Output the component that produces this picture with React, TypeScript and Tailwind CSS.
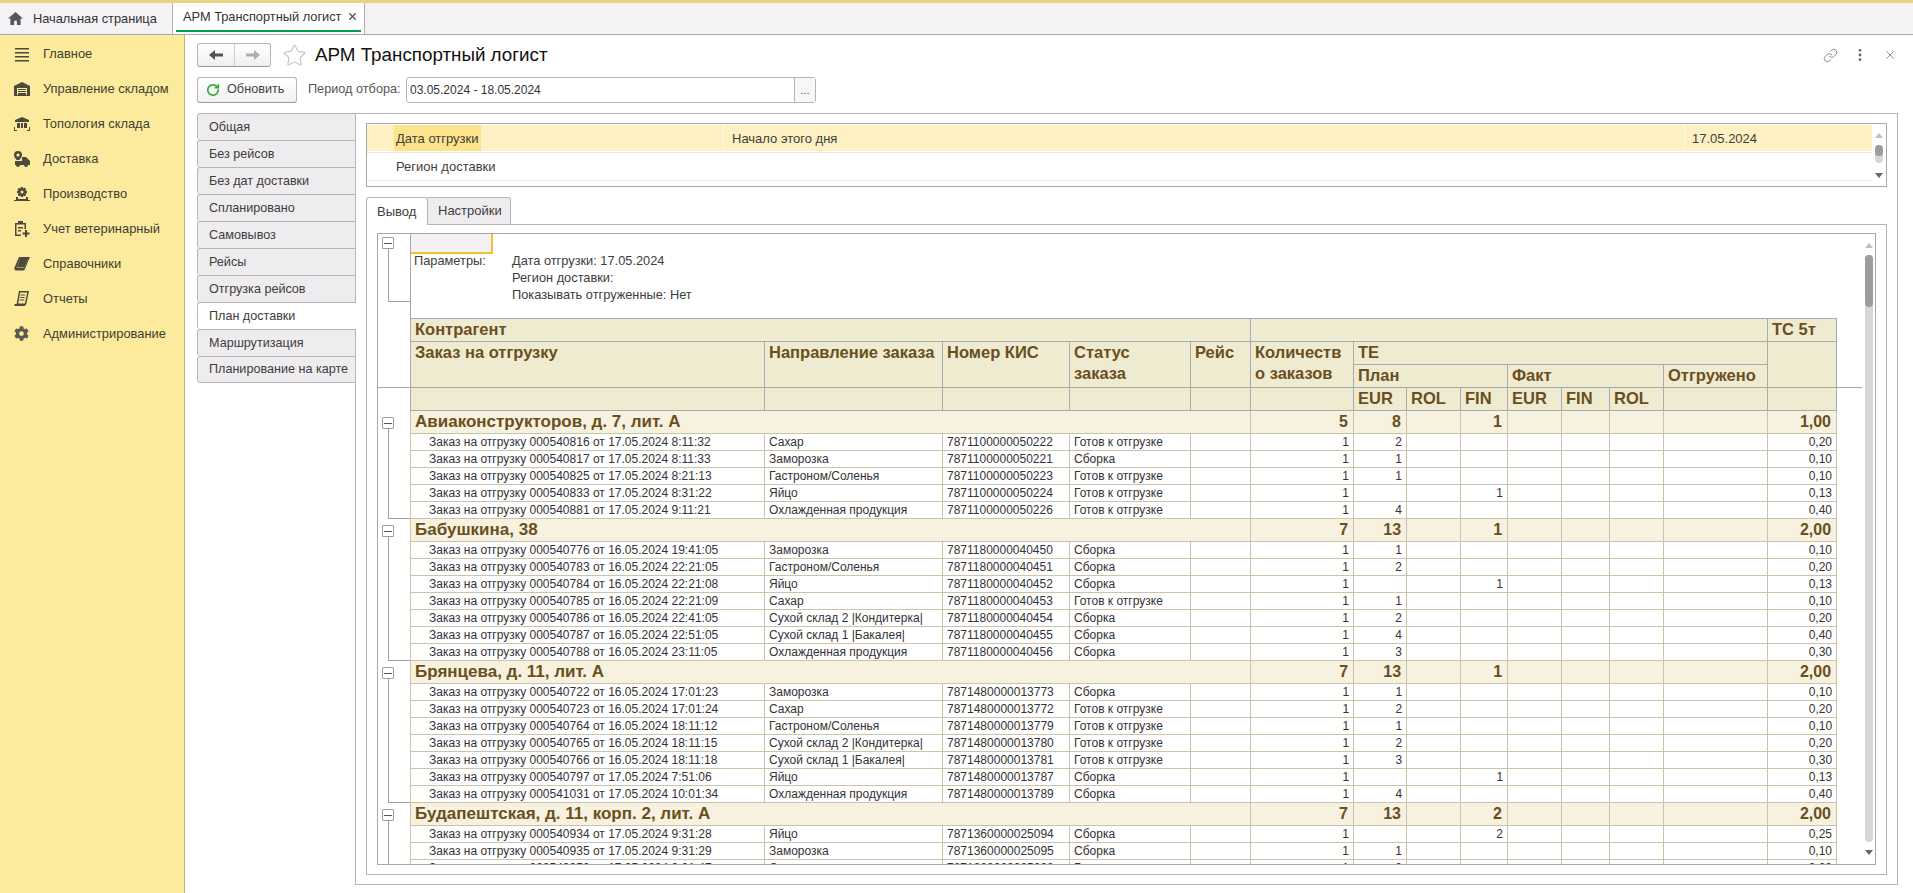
import React from 'react';
import { EllipsisVertical, Link, RotateCw, Star, X } from 'lucide-react';
import { FaCog } from 'react-icons/fa';

type Order = {
  name: string;
  dir: string;
  kis: string;
  status: string;
  eur?: string;
  fin?: string;
  ts: string;
};

type Group = {
  title: string;
  count: string;
  eur: string;
  fin: string;
  ts: string;
  orders: Order[];
};

const READY = 'Готов к отгрузке';
const PICK = 'Сборка';
const ORD = 'Заказ на отгрузку ';

const groups: Group[] = [
  {
    title: 'Авиаконструкторов, д. 7, лит. А',
    count: '5',
    eur: '8',
    fin: '1',
    ts: '1,00',
    orders: [
      { name: ORD + '000540816 от 17.05.2024 8:11:32', dir: 'Сахар', kis: '7871100000050222', status: READY, eur: '2', ts: '0,20' },
      { name: ORD + '000540817 от 17.05.2024 8:11:33', dir: 'Заморозка', kis: '7871100000050221', status: PICK, eur: '1', ts: '0,10' },
      { name: ORD + '000540825 от 17.05.2024 8:21:13', dir: 'Гастроном/Соленья', kis: '7871100000050223', status: READY, eur: '1', ts: '0,10' },
      { name: ORD + '000540833 от 17.05.2024 8:31:22', dir: 'Яйцо', kis: '7871100000050224', status: READY, fin: '1', ts: '0,13' },
      { name: ORD + '000540881 от 17.05.2024 9:11:21', dir: 'Охлажденная продукция', kis: '7871100000050226', status: READY, eur: '4', ts: '0,40' },
    ],
  },
  {
    title: 'Бабушкина, 38',
    count: '7',
    eur: '13',
    fin: '1',
    ts: '2,00',
    orders: [
      { name: ORD + '000540776 от 16.05.2024 19:41:05', dir: 'Заморозка', kis: '7871180000040450', status: PICK, eur: '1', ts: '0,10' },
      { name: ORD + '000540783 от 16.05.2024 22:21:05', dir: 'Гастроном/Соленья', kis: '7871180000040451', status: PICK, eur: '2', ts: '0,20' },
      { name: ORD + '000540784 от 16.05.2024 22:21:08', dir: 'Яйцо', kis: '7871180000040452', status: PICK, fin: '1', ts: '0,13' },
      { name: ORD + '000540785 от 16.05.2024 22:21:09', dir: 'Сахар', kis: '7871180000040453', status: READY, eur: '1', ts: '0,10' },
      { name: ORD + '000540786 от 16.05.2024 22:41:05', dir: 'Сухой склад 2 |Кондитерка|', kis: '7871180000040454', status: PICK, eur: '2', ts: '0,20' },
      { name: ORD + '000540787 от 16.05.2024 22:51:05', dir: 'Сухой склад 1 |Бакалея|', kis: '7871180000040455', status: PICK, eur: '4', ts: '0,40' },
      { name: ORD + '000540788 от 16.05.2024 23:11:05', dir: 'Охлажденная продукция', kis: '7871180000040456', status: PICK, eur: '3', ts: '0,30' },
    ],
  },
  {
    title: 'Брянцева, д. 11, лит. А',
    count: '7',
    eur: '13',
    fin: '1',
    ts: '2,00',
    orders: [
      { name: ORD + '000540722 от 16.05.2024 17:01:23', dir: 'Заморозка', kis: '7871480000013773', status: PICK, eur: '1', ts: '0,10' },
      { name: ORD + '000540723 от 16.05.2024 17:01:24', dir: 'Сахар', kis: '7871480000013772', status: READY, eur: '2', ts: '0,20' },
      { name: ORD + '000540764 от 16.05.2024 18:11:12', dir: 'Гастроном/Соленья', kis: '7871480000013779', status: READY, eur: '1', ts: '0,10' },
      { name: ORD + '000540765 от 16.05.2024 18:11:15', dir: 'Сухой склад 2 |Кондитерка|', kis: '7871480000013780', status: READY, eur: '2', ts: '0,20' },
      { name: ORD + '000540766 от 16.05.2024 18:11:18', dir: 'Сухой склад 1 |Бакалея|', kis: '7871480000013781', status: READY, eur: '3', ts: '0,30' },
      { name: ORD + '000540797 от 17.05.2024 7:51:06', dir: 'Яйцо', kis: '7871480000013787', status: PICK, fin: '1', ts: '0,13' },
      { name: ORD + '000541031 от 17.05.2024 10:01:34', dir: 'Охлажденная продукция', kis: '7871480000013789', status: PICK, eur: '4', ts: '0,40' },
    ],
  },
  {
    title: 'Будапештская, д. 11, корп. 2, лит. А',
    count: '7',
    eur: '13',
    fin: '2',
    ts: '2,00',
    orders: [
      { name: ORD + '000540934 от 17.05.2024 9:31:28', dir: 'Яйцо', kis: '7871360000025094', status: PICK, fin: '2', ts: '0,25' },
      { name: ORD + '000540935 от 17.05.2024 9:31:29', dir: 'Заморозка', kis: '7871360000025095', status: PICK, eur: '1', ts: '0,10' },
      { name: ORD + '000540950 от 17.05.2024 9:01:47', dir: 'Сахар', kis: '7871360000025098', status: READY, eur: '2', ts: '0,20' },
    ],
  },
];

const colWidths = [355, 178, 127, 121, 60, 103, 53, 54, 47, 54, 48, 54, 104, 69];

const Cols = () => (
  <colgroup>
    {colWidths.map((w, i) => (
      <col key={i} style={{ width: w }} />
    ))}
  </colgroup>
);

const th = 'border-r border-b border-[#a9a9b2] bg-[#efebd0] p-0 px-[4px] text-left align-top text-[16.5px] leading-[21px] font-bold whitespace-nowrap text-[#6a4f1e]';
const gc = 'border-r border-b border-[#cfc2ab] bg-[#f6f2df] p-0 align-middle font-bold leading-[20px] text-[#6a4f1e]';
const gn = gc + ' pr-[5px] text-right text-[16px]';
const td = 'border-r border-b border-[#cfc2ab] p-0 px-[4px] align-middle text-[12px] leading-[16px] whitespace-nowrap overflow-hidden text-[#333333]';

const Icon = ({ children }: { children: React.ReactNode }) => (
  <svg viewBox="0 0 16 16" width="16" height="16" fill="#4b4a3c">
    {children}
  </svg>
);

const navItems: { label: string; icon: React.ReactNode }[] = [
  {
    label: 'Главное',
    icon: (
      <Icon>
        <path d="M1 2h14v1.600H1zM1 6h14v1.600H1zM1 10h14v1.600H1zM1 14h14v1.600H1z" />
      </Icon>
    ),
  },
  {
    label: 'Управление складом',
    icon: (
      <Icon>
        <path d="M0 5 8 1l8 4v10H0zm3 2v7h10V7z" />
        <path d="M4 8h8v1H4zM4 10h8v1H4zM4 12h8v2H4z" />
      </Icon>
    ),
  },
  {
    label: 'Топология склада',
    icon: (
      <Icon>
        <path d="M1 4 8 1l7 3v2H1zM3 7h3v5H3zM7 7h2v5H7zM10 7h3v5h-3z" />
        <path d="M0 11h1v3h2v1H0zM15 11h1v4h-3v-1h2z" />
      </Icon>
    ),
  },
  {
    label: 'Доставка',
    icon: (
      <Icon>
        <path d="M4 0a4 4 0 0 1 4 4c0 2-2 4-2.600 5H2.600C2 8 0 6 0 4a4 4 0 0 1 4-4zm0 2.400a1.600 1.600 0 1 0 0 3.200 1.600 1.600 0 0 0 0-3.200z" />
        <path d="M1 10h7V6h4l4 4v4h-2a2 2 0 0 1-4 0H6a2 2 0 0 1-4 0H1z" />
      </Icon>
    ),
  },
  {
    label: 'Производство',
    icon: (
      <Icon>
        <path d="M7 1h2l.4 1.500 1.400-.8 1.400 1.400-.8 1.400L13 5v2l-1.500.4.8 1.400-1.400 1.400-1.400-.8L9 11H7l-.4-1.500-1.400.8-1.400-1.400.8-1.400L3 7V5l1.500-.4-.8-1.400 1.400-1.400 1.400.8zM8 4.500a1.500 1.500 0 1 0 0 3 1.500 1.500 0 0 0 0-3z" />
        <path d="M2 11h2v2h8v-2h2v3h2v1H0v-1h2z" />
      </Icon>
    ),
  },
  {
    label: 'Учет ветеринарный',
    icon: (
      <Icon>
        <path d="M1 2h3V0h5v2h3v6h-1.500V3.500h-8v10H7V15H1z" />
        <path d="M4 6h5v1.500H4zM4 9h3v1.500H4zM11 9h2v2.500h2.500v2H13V16h-2v-2.500H8.500v-2H11z" />
      </Icon>
    ),
  },
  {
    label: 'Справочники',
    icon: (
      <Icon>
        <path d="M5 1h11l-1 2-4 10c-.3.8-1 1.500-2 1.500H2c-1.500 0-2-1.500-1.500-3zm1 2L2.500 11.500h8L14 3z" />
        <path d="M6 3h8l-3.400 8H2.800z" />
      </Icon>
    ),
  },
  {
    label: 'Отчеты',
    icon: (
      <Icon>
        <path d="M5 0h10l-2.500 12c-.2 1.500-1 3-2.500 3H1c-1 0-1-1.500 0-2h1.600zm1.200 1.500L4.200 12.500h6.700l2.300-11z" />
        <path d="M6.800 3.500h4.500l-.2 1H6.600zM6.300 6h4.500l-.2 1H6.100zM5.800 8.500h4.500l-.2 1H5.600z" />
      </Icon>
    ),
  },
  {
    label: 'Администрирование',
    icon: <FaCog size={15} color="#5a5a50" />,
  },
];

const sideTabs = ['Общая', 'Без рейсов', 'Без дат доставки', 'Спланировано', 'Самовывоз', 'Рейсы', 'Отгрузка рейсов', 'План доставки', 'Маршрутизация', 'Планирование на карте'];

const TopBar = () => (
  <div className="flex h-[35px] shrink-0 border-t-[3px] border-b border-t-[#ecd27f] border-b-[#a8a8a8] bg-[#f5f2f6] text-[12.8px] whitespace-nowrap text-[#333333]">
    <div className="flex w-[173px] items-center gap-[10px] border-r border-[#b0b0b0] pl-[8px]">
      <svg viewBox="0 0 16 14" width="15" height="13" fill="#55555a">
        <path d="M8 0 0 7h2.500v7h4V9.500h3V14h4V7H16z" />
      </svg>
      <span>Начальная страница</span>
    </div>
    <div className="flex w-[192px] flex-col border-r border-[#b0b0b0] bg-white px-[3px]">
      <div className="flex flex-1 items-center pl-[7px]">
        <span>АРМ Транспортный логист</span>
        <X size={11} strokeWidth={3} className="ml-[6px] text-[#555555]" />
      </div>
      <div className="mb-[2px] h-[2px] bg-[#0b9a4b]" />
    </div>
  </div>
);

const Sidebar = () => (
  <aside className="flex w-[185px] shrink-0 flex-col border-r border-[#c9b568] bg-[#fdeb9d] pt-px text-[12.9px] text-[#3d3d33]">
    {navItems.map((item) => (
      <div key={item.label} className="flex h-[35px] items-center">
        <div className="flex w-[43px] justify-center">{item.icon}</div>
        <span>{item.label}</span>
      </div>
    ))}
  </aside>
);

const NavArrow = ({ flip, color }: { flip?: boolean; color: string }) => (
  <svg viewBox="0 0 14 10" width="14" height="10" fill={color} className={flip ? 'rotate-180' : ''}>
    <path d="M0 5 6 0v3.500h8v3H6V10z" />
  </svg>
);

const Toolbar = () => (
  <>
    <div className="flex h-[24px] items-center pr-[8px]">
      <div className="flex h-[24px] w-[74px] rounded-[3px] border border-[#b5b5b5] border-b-[#9a9a9a] bg-gradient-to-b from-white to-[#efefef]">
        <div className="flex w-[37px] items-center justify-center border-r border-[#d0d0d0]">
          <NavArrow color="#555555" />
        </div>
        <div className="flex flex-1 items-center justify-center">
          <NavArrow flip color="#adadad" />
        </div>
      </div>
      <Star size={25} strokeWidth={1} className="ml-[11px] text-[#bdbdbd]" />
      <h1 className="ml-[8px] text-[18.8px] leading-none font-normal text-[#111111]">АРМ Транспортный логист</h1>
      <div className="ml-auto flex items-center text-[#666666]">
        <div className="flex w-[30px] justify-center"><Link size={15} strokeWidth={1.2} /></div>
        <div className="flex w-[30px] justify-center"><EllipsisVertical size={16} strokeWidth={2.2} /></div>
        <div className="flex w-[30px] justify-center"><X size={14} strokeWidth={1.2} /></div>
      </div>
    </div>
    <div className="mt-[10px] flex h-[26px] items-center text-[12.7px]">
      <div className="flex h-[26px] w-[100px] items-center rounded-[3px] border border-[#b5b5b5] border-b-[#9a9a9a] bg-gradient-to-b from-white to-[#f1f1f1] pl-[8px] text-[#444444]">
        <RotateCw size={14} strokeWidth={3} className="text-[#3cab3c]" />
        <span className="ml-[7px]">Обновить</span>
      </div>
      <span className="ml-[11px] w-[98px] text-[#555555]">Период отбора:</span>
      <div className="flex h-[26px] w-[410px] rounded-[3px] border border-[#b5b5b5] bg-white">
        <div className="flex flex-1 items-center pl-[3px] text-[12px] text-[#333333]">03.05.2024 - 18.05.2024</div>
        <div className="flex w-[21px] items-center justify-center border-l border-[#b5b5b5] bg-[#f7f7f7] text-[11px] text-[#555555]">...</div>
      </div>
    </div>
  </>
);

const SideTabs = () => (
  <div className="relative z-10 -mr-px flex w-[159px] shrink-0 flex-col self-start text-[12.6px] text-[#3d3d3d]">
    {sideTabs.map((t, i) => {
      const active = t === 'План доставки';
      return (
        <div
          key={t}
          className={
            'flex h-[27px] items-center rounded-l-[3px] border-t border-l border-[#b5b5b5] pl-[11px] ' +
            (active ? 'bg-white ' : 'border-r bg-[#efecef] ') +
            (i === sideTabs.length - 1 ? 'border-b' : '')
          }
        >
          {t}
        </div>
      );
    })}
  </div>
);

const Arrow = ({ down }: { down?: boolean }) => (
  <svg viewBox="0 0 8 5" width="8" height="5" fill={down ? '#666666' : '#c0c0c0'} className="shrink-0">
    <path d={down ? 'M0 0h8L4 5z' : 'M4 0l4 5H0z'} />
  </svg>
);

const FilterTable = () => (
  <div className="flex h-[64px] shrink-0 border border-[#a8a8a8] bg-white text-[13px] text-[#3d3d3d]">
    <div className="flex flex-1 flex-col pt-px">
      <div className="flex h-[26px] items-center bg-[#fdf1c4]">
        <div className="w-[27px]" />
        <div className="flex h-full w-[87px] items-center bg-[#fde48a] pt-px pl-[2px]">Дата отгрузки</div>
        <div className="h-full w-[242px]" />
        <div className="h-full w-px bg-[#fffbe9]" />
        <div className="flex h-full w-[960px] items-center pt-px pl-[8px]">Начало этого дня</div>
        <div className="h-full w-px bg-[#fffbe9]" />
        <div className="pt-px pl-[7px]">17.05.2024</div>
      </div>
      <div className="h-[2px] border-b border-[#e6e6e6]" />
      <div className="flex h-[28px] items-center border-b border-[#e6e6e6] pt-px pl-[29px]">Регион доставки</div>
    </div>
    <div className="flex w-[14px] shrink-0 flex-col items-center pt-[9px] pb-[8px]">
      <Arrow />
      <div className="mt-[7px] h-[18px] w-[8px] rounded-full bg-[#d6d6d6]">
        <div className="h-[11px] w-[8px] rounded-full bg-[#9c9c9c]" />
      </div>
      <div className="flex-1" />
      <Arrow down />
    </div>
  </div>
);

// tree gutter: minus box, then the line that goes down to the end of the section
const Gutter = ({ pad }: { pad: string }) => (
  <div className={'flex w-[32px] shrink-0 flex-col pl-[4px] ' + pad}>
    <div className="flex h-[12px] w-[12px] shrink-0 items-center justify-center rounded-[1px] border border-[#a0a0a0] bg-white">
      <div className="h-px w-[8px] bg-[#555555]" />
    </div>
    <div className="ml-[6px] flex-1 border-b border-l border-[#a0a0a0]" />
  </div>
);

const HeaderTable = () => (
  <div className="relative flex">
    <div className="w-[32px] shrink-0" />
    <table className="w-[1427px] table-fixed border-separate border-spacing-0">
      <Cols />
      <tbody>
        <tr className="h-[24px]">
          <th colSpan={5} className={th + ' border-t border-l'}>Контрагент</th>
          <th colSpan={8} className={th + ' border-t'} />
          <th className={th + ' border-t'}>ТС 5т</th>
        </tr>
        <tr className="h-[23px]">
          <th rowSpan={2} className={th + ' border-l'}>Заказ на отгрузку</th>
          <th rowSpan={2} className={th}>Направление заказа</th>
          <th rowSpan={2} className={th}>Номер КИС</th>
          <th rowSpan={2} className={th}>Статус<br />заказа</th>
          <th rowSpan={2} className={th}>Рейс</th>
          <th rowSpan={2} className={th}>Количеств<br />о заказов</th>
          <th colSpan={7} className={th}>ТЕ</th>
          <th rowSpan={2} className={th} />
        </tr>
        <tr className="h-[23px]">
          <th colSpan={3} className={th}>План</th>
          <th colSpan={3} className={th}>Факт</th>
          <th className={th}>Отгружено</th>
        </tr>
        <tr className="h-[23px]">
          <th className={th + ' border-l'} />
          <th className={th} />
          <th className={th} />
          <th className={th} />
          <th className={th} />
          <th className={th} />
          <th className={th}>EUR</th>
          <th className={th}>ROL</th>
          <th className={th}>FIN</th>
          <th className={th}>EUR</th>
          <th className={th}>FIN</th>
          <th className={th}>ROL</th>
          <th className={th} />
          <th className={th} />
        </tr>
      </tbody>
    </table>
    <div className="absolute top-[69px] left-0 h-px w-[1484px] bg-[#a8a8a8]" />
  </div>
);

const GroupSection = ({ group }: { group: Group }) => (
  <div className="flex shrink-0">
    <Gutter pad="pt-[6px]" />
    <table className="w-[1427px] table-fixed border-separate border-spacing-0">
      <Cols />
      <tbody>
        <tr className="h-[23px]">
          <td colSpan={5} className={gc + ' border-l pl-[4px] text-left text-[17px]'}>{group.title}</td>
          <td className={gn}>{group.count}</td>
          <td className={gn}>{group.eur}</td>
          <td className={gn} />
          <td className={gn}>{group.fin}</td>
          <td className={gn} />
          <td className={gn} />
          <td className={gn} />
          <td className={gn} />
          <td className={gn + ' pr-[4px]'}>{group.ts}</td>
        </tr>
        {group.orders.map((o) => (
          <tr key={o.name} className="h-[17px]">
            <td className={td + ' border-l pl-[18px]'}>{o.name}</td>
            <td className={td}>{o.dir}</td>
            <td className={td}>{o.kis}</td>
            <td className={td}>{o.status}</td>
            <td className={td} />
            <td className={td + ' text-right'}>1</td>
            <td className={td + ' text-right'}>{o.eur}</td>
            <td className={td} />
            <td className={td + ' text-right'}>{o.fin}</td>
            <td className={td} />
            <td className={td} />
            <td className={td} />
            <td className={td} />
            <td className={td + ' text-right'}>{o.ts}</td>
          </tr>
        ))}
      </tbody>
    </table>
  </div>
);

const Report = () => (
  <div className="flex min-h-0 flex-1 border border-[#a8a8a8] bg-white">
    <div className="flex min-w-0 flex-1 flex-col overflow-hidden">
      <div className="flex h-[84px] shrink-0">
        <Gutter pad="pt-[3px] pb-[16px]" />
        <div className="flex-1 border-l border-[#a8a8a8] text-[12.8px] leading-[17px] text-[#3d3d3d]">
          <div className="h-[20px] w-[82px] border-r-2 border-b-2 border-[#f5c22e] bg-[#f4f1f5]" />
          <div className="-mt-[2px] flex">
            <div className="w-[101px] pl-[3px]">Параметры:</div>
            <div className="flex flex-col">
              <span>Дата отгрузки: 17.05.2024</span>
              <span>Регион доставки:</span>
              <span>Показывать отгруженные: Нет</span>
            </div>
          </div>
        </div>
      </div>
      <HeaderTable />
      {groups.map((g) => (
        <GroupSection key={g.title} group={g} />
      ))}
    </div>
    <div className="flex w-[13px] shrink-0 flex-col items-center pt-[9px] pb-[9px]">
      <Arrow />
      <div className="mt-[7px] flex w-[8px] flex-1 flex-col rounded-full bg-[#d6d6d6]">
        <div className="h-[52px] rounded-full bg-[#9c9c9c]" />
      </div>
      <div className="mt-[8px]"><Arrow down /></div>
    </div>
  </div>
);

const OutputTabs = () => (
  <div className="mt-[10px] flex min-h-0 flex-1 flex-col">
    <div className="relative z-10 -mb-px flex h-[28px] shrink-0 text-[13px] text-[#3d3d3d]">
      <div className="flex w-[62px] items-center rounded-t-[3px] border-t border-r border-l border-[#b5b5b5] bg-white pl-[10px]">Вывод</div>
      <div className="flex w-[83px] items-center rounded-tr-[3px] border-t border-r border-b border-[#b5b5b5] bg-[#efecef] pl-[10px]">Настройки</div>
    </div>
    <div className="flex min-h-0 flex-1 border border-[#b5b5b5] px-[10px] pt-[8px] pb-[9px]">
      <Report />
    </div>
  </div>
);

export default function App() {
  return (
    <div className="flex h-[893px] w-[1913px] flex-col overflow-hidden bg-white font-['Liberation_Sans',Arial,sans-serif]">
      <TopBar />
      <div className="flex min-h-0 flex-1">
        <Sidebar />
        <main className="flex min-w-0 flex-1 flex-col pt-[8px] pl-[12px]">
          <Toolbar />
          <div className="mt-[10px] flex min-h-0 flex-1 pr-[15px] pb-[8px]">
            <SideTabs />
            <div className="flex min-w-0 flex-1 flex-col border border-[#b5b5b5] pt-[9px] pr-[10px] pb-[9px] pl-[10px]">
              <FilterTable />
              <OutputTabs />
            </div>
          </div>
        </main>
      </div>
    </div>
  );
}
